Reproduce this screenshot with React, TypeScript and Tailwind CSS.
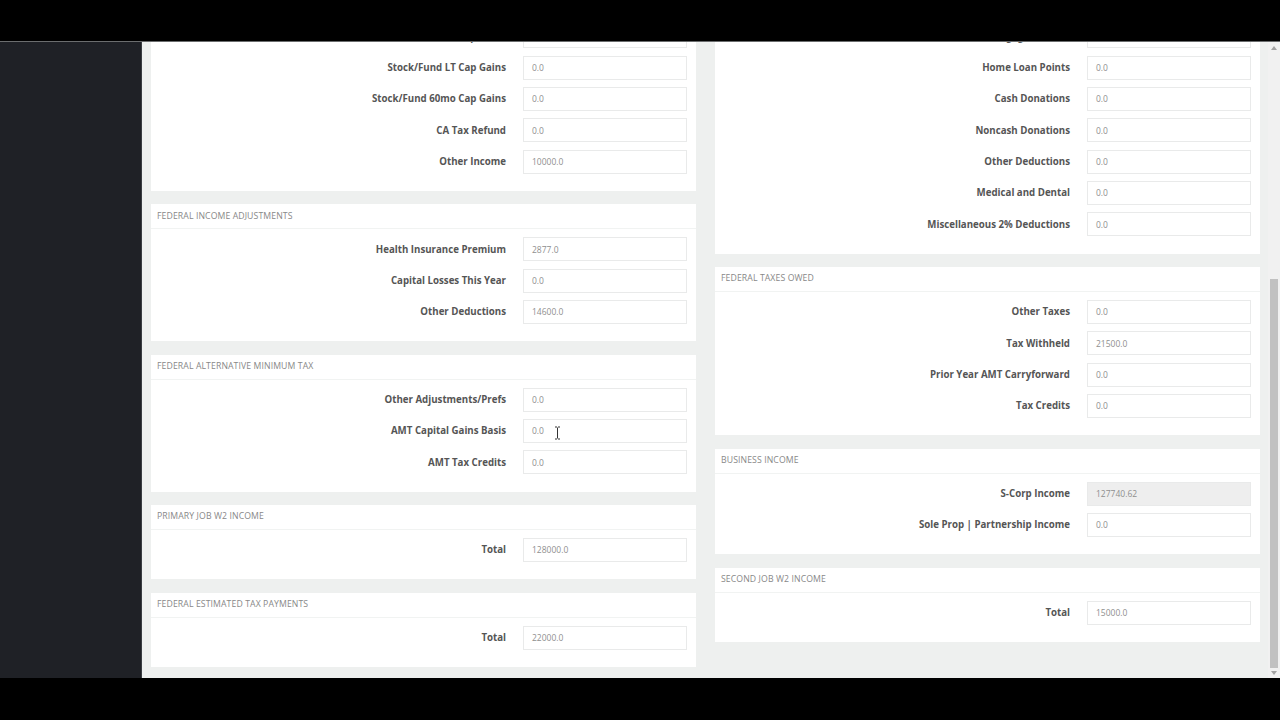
import React from "react";

type RowProps = { label: string; value: string; shaded?: boolean };

function Row({ label, value, shaded }: RowProps) {
  return (
    <div className="flex h-[31.33px] items-center">
      <div className="w-[355px] shrink-0 text-right text-[9.7px] font-bold leading-none text-[#555]">
        {label}
      </div>
      <div
        className={
          "ml-[17px] flex h-[24px] w-[164px] items-center border border-[#e9eaea] pl-[8px] pt-[1px] text-[8.5px] leading-none text-[#8f8f8f] " +
          (shaded ? "bg-[#eeeeee]" : "bg-white")
        }
      >
        {value}
      </div>
    </div>
  );
}

function Panel({ title, children }: { title?: string; children: React.ReactNode }) {
  return (
    <div className="bg-white">
      {title && (
        <div className="flex h-[25px] items-center border-b border-[#f1f3f2] pb-[1px] pl-[6px] text-[8.7px] uppercase leading-none tracking-[0.1px] text-[#888]">
          {title}
        </div>
      )}
      <div className="pb-[13.67px] pt-[4.33px]">{children}</div>
    </div>
  );
}

export default function App() {
  return (
    <div className="flex h-[720px] w-[1280px] flex-col overflow-hidden bg-black font-['Open_Sans',sans-serif]">
      <div className="h-[41px] shrink-0 bg-black" />
      <div className="h-px shrink-0 bg-[#6b6d6e]" />
      <div className="flex h-[636px] shrink-0">
        <div className="w-[141px] shrink-0 bg-[#1f2126]" />
        <div className="w-px shrink-0 bg-[#3b3e43]" />
        <div className="relative flex-1 overflow-hidden bg-[#eef0ef]">
          <div className="mt-[-25.5px] flex gap-[19px] pl-[9px] pr-[8px]">
            <div className="flex w-[545px] flex-col gap-[13.33px]">
              <Panel>
                <Row label="Stock/Fund ST Cap Gains" value="0.0" />
                <Row label="Stock/Fund LT Cap Gains" value="0.0" />
                <Row label="Stock/Fund 60mo Cap Gains" value="0.0" />
                <Row label="CA Tax Refund" value="0.0" />
                <Row label="Other Income" value="10000.0" />
              </Panel>
              <Panel title="Federal Income Adjustments">
                <Row label="Health Insurance Premium" value="2877.0" />
                <Row label="Capital Losses This Year" value="0.0" />
                <Row label="Other Deductions" value="14600.0" />
              </Panel>
              <Panel title="Federal Alternative Minimum Tax">
                <Row label="Other Adjustments/Prefs" value="0.0" />
                <Row label="AMT Capital Gains Basis" value="0.0" />
                <Row label="AMT Tax Credits" value="0.0" />
              </Panel>
              <Panel title="Primary Job W2 Income">
                <Row label="Total" value="128000.0" />
              </Panel>
              <Panel title="Federal Estimated Tax Payments">
                <Row label="Total" value="22000.0" />
              </Panel>
            </div>
            <div className="flex w-[545px] flex-col gap-[13.33px]">
              <Panel>
                <Row label="Mortgage Interest" value="0.0" />
                <Row label="Home Loan Points" value="0.0" />
                <Row label="Cash Donations" value="0.0" />
                <Row label="Noncash Donations" value="0.0" />
                <Row label="Other Deductions" value="0.0" />
                <Row label="Medical and Dental" value="0.0" />
                <Row label="Miscellaneous 2% Deductions" value="0.0" />
              </Panel>
              <Panel title="Federal Taxes Owed">
                <Row label="Other Taxes" value="0.0" />
                <Row label="Tax Withheld" value="21500.0" />
                <Row label="Prior Year AMT Carryforward" value="0.0" />
                <Row label="Tax Credits" value="0.0" />
              </Panel>
              <Panel title="Business Income">
                <Row label="S-Corp Income" value="127740.62" shaded />
                <Row label="Sole Prop | Partnership Income" value="0.0" />
              </Panel>
              <Panel title="Second Job W2 Income">
                <Row label="Total" value="15000.0" />
              </Panel>
            </div>
          </div>
          <svg
            className="absolute left-[412px] top-[384px]"
            width="7"
            height="14"
            viewBox="0 0 7 14"
          >
            <path d="M1 1h2M4 1h2M3.5 1.5v11M1 13h2M4 13h2" stroke="#333" strokeWidth="1" fill="none" />
          </svg>
        </div>
        <div className="flex w-[12px] shrink-0 flex-col bg-[#f1f1f1]">
          <div className="flex h-[12px] items-center justify-center">
            <svg width="6" height="4" viewBox="0 0 6 4">
              <path d="M0 4L3 0L6 4Z" fill="#a3a3a3" />
            </svg>
          </div>
          <div className="flex-1 pt-[225px]">
            <div className="mx-[2px] h-[389px] bg-[#c1c1c1]" />
          </div>
          <div className="flex h-[10px] items-center justify-center">
            <svg width="6" height="4" viewBox="0 0 6 4">
              <path d="M0 0L3 4L6 0Z" fill="#a3a3a3" />
            </svg>
          </div>
        </div>
      </div>
      <div className="flex-1 bg-black" />
    </div>
  );
}
